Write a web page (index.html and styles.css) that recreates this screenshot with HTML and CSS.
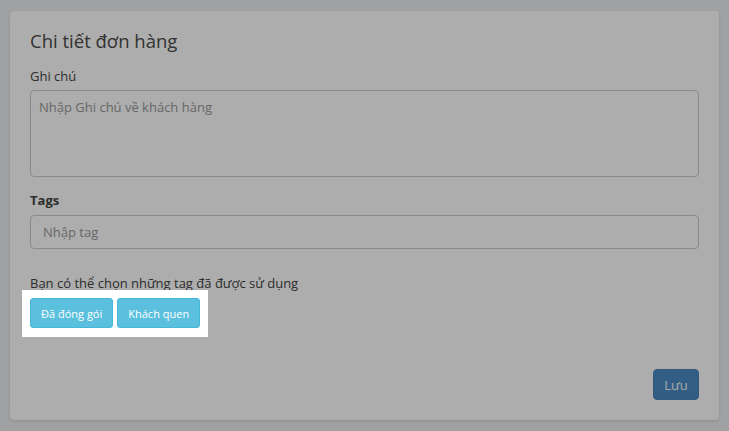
FILE: index.html
```html
<!DOCTYPE html>
<html lang="vi">
<head>
<meta charset="utf-8">
<title>Chi tiết đơn hàng</title>
<link rel="stylesheet" href="styles.css">
</head>
<body>
<div class="card">
  <h3 class="card-title">Chi tiết đơn hàng</h3>
  <label class="label">Ghi chú</label>
  <textarea class="field textarea" placeholder="Nhập Ghi chú về khách hàng"></textarea>
  <label class="label label-bold">Tags</label>
  <input class="field input" type="text" placeholder="Nhập tag">
  <p class="hint">Bạn có thể chọn những tag đã được sử dụng</p>
  <div class="tag-highlight">
    <button class="tag-btn">Đã đóng gói</button>
    <button class="tag-btn">Khách quen</button>
  </div>
  <div class="footer">
    <button class="save-btn">Lưu</button>
  </div>
</div>
<div class="overlay"></div>
</body>
</html>
```
FILE: styles.css
```css
* { box-sizing: border-box; }
html, body { margin: 0; padding: 0; }
body {
  background: #ebedf0;
  font-family: "Open Sans", "Liberation Sans", sans-serif;
  color: #444;
  width: 729px;
  height: 431px;
  overflow: hidden;
  padding-top: 11px;
}
.card {
  margin: 0 10px;
  height: 409px;
  background: #fff;
  border-radius: 4px;
  box-shadow: 0 1px 3px rgba(0,0,0,0.12);
  padding: 20px;
  display: flex;
  flex-direction: column;
  align-items: flex-start;
}
.card-title {
  margin: -3px 0 0;
  font-size: 18.5px;
  line-height: 25px;
  font-weight: 400;
  color: #4a4a4a;
}
.label {
  display: block;
  margin-top: 13px;
  font-size: 13px;
  line-height: 20px;
  color: #444;
}
.label-bold {
  font-weight: 700;
  margin-top: 13px;
}
.field {
  display: block;
  width: 669px;
  margin-top: 4px;
  border: 1px solid #ccc;
  border-radius: 4px;
  background: #fff;
  font-family: inherit;
  font-size: 13px;
  color: #555;
  padding: 6px 12px;
  outline: none;
}
.field::placeholder { color: #999; }
.textarea {
  height: 87px;
  resize: none;
  line-height: 20px;
  padding: 6px 8px;
}
.input {
  height: 34px;
  margin-top: 5px;
}
.hint {
  margin: 24px 0 0;
  font-size: 13px;
  line-height: 20px;
  color: #444;
}
.tag-highlight {
  position: relative;
  z-index: 10;
  margin: -3px 0 0 -8px;
  padding: 8px 8px 9px;
  background: #fff;
  display: flex;
  gap: 4px;
}
.tag-btn {
  height: 30px;
  padding: 0 10px;
  border: 1px solid #46b8da;
  border-radius: 3px;
  background: #5bc0de;
  color: #fff;
  font-family: inherit;
  font-size: 11px;
  cursor: pointer;
}
.footer {
  margin-top: auto;
  align-self: stretch;
  display: flex;
  justify-content: flex-end;
}
.save-btn {
  width: 46px;
  height: 31px;
  padding: 0;
  border: 1px solid #4a86bd;
  border-radius: 4px;
  background: #4a8bc4;
  color: #f4f6f8;
  font-family: inherit;
  font-size: 13px;
}
.overlay {
  position: fixed;
  inset: 0;
  background: rgba(0, 0, 0, 0.32);
  z-index: 5;
}
```
